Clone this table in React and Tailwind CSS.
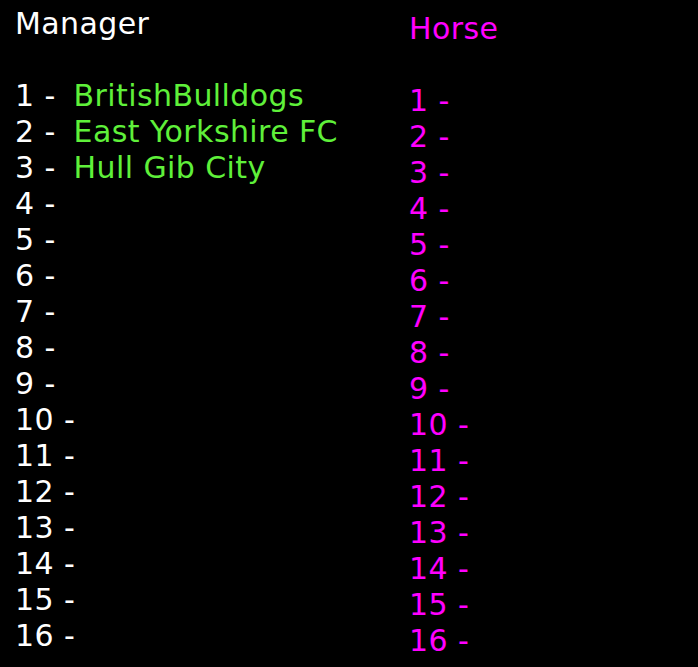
const managers = ["BritishBulldogs", "East Yorkshire FC", "Hull Gib City"];
const slots = Array.from({ length: 16 }, (_, i) => i + 1);

export default function App() {
  return (
    <div
      className="flex min-h-[667px] w-[698px] bg-black pl-[15px] pt-[6px] text-[30px] leading-[36px] tracking-[0.4px]"
      style={{ fontFamily: '"DejaVu Sans", Verdana, sans-serif' }}
    >
      <div className="w-[394px] text-white">
        <div>Manager</div>
        <div>&nbsp;</div>
        {slots.map((n) => (
          <div key={n} className="whitespace-pre">
            {n} - <span className="ml-[8px] text-[#5ff03a]">{managers[n - 1] || ""}</span>
          </div>
        ))}
      </div>
      <div className="pt-[5px] text-[#ff00ff]">
        <div>Horse</div>
        <div>&nbsp;</div>
        {slots.map((n) => (
          <div key={n} className="whitespace-pre">
            {n} -
          </div>
        ))}
      </div>
    </div>
  );
}
